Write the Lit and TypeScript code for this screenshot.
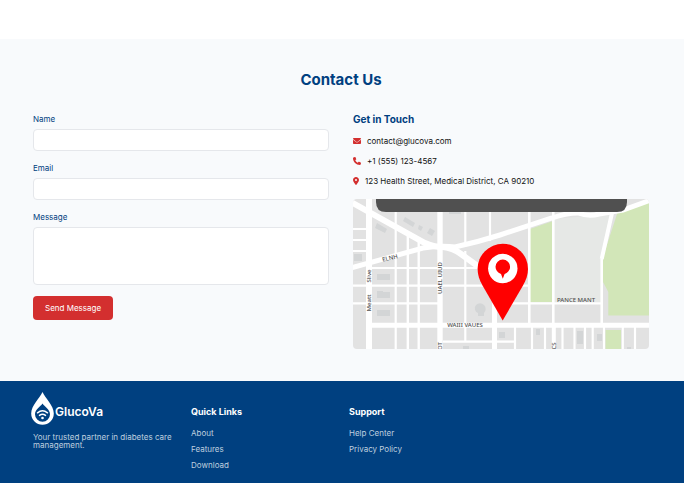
import { LitElement, html, css, svg } from "lit";
import { customElement } from "lit/decorators.js";

const icons = {
  mail: html`<svg class="icon" width="8" height="8" viewBox="0 0 512 512" aria-hidden="true"><path d="M48 64C21.500 64 0 85.500 0 112c0 15.100 7.100 29.300 19.200 38.400L236.800 313.600c11.400 8.500 27 8.500 38.400 0L492.800 150.400c12.100-9.100 19.200-23.300 19.200-38.400c0-26.500-21.500-48-48-48H48zM0 176V384c0 35.300 28.700 64 64 64H448c35.300 0 64-28.700 64-64V176L294.400 339.200c-22.800 17.100-54 17.100-76.800 0L0 176z"/></svg>`,
  phone: html`<svg class="icon" width="8" height="8" viewBox="0 0 512 512" aria-hidden="true"><path d="M164.900 24.600c-7.700-18.600-28-28.500-47.400-23.200l-88 24C12.100 30.200 0 46 0 64C0 311.400 200.600 512 448 512c18 0 33.800-12.100 38.600-29.500l24-88c5.300-19.400-4.600-39.700-23.200-47.400l-96-40c-16.300-6.800-35.200-2.100-46.300 11.600L304.700 368C234.300 334.700 177.300 277.700 144 207.300L193.300 167c13.700-11.200 18.400-30 11.600-46.300l-40-96z"/></svg>`,
  place: html`<svg class="icon" width="6" height="8" viewBox="0 0 384 512" aria-hidden="true"><path d="M215.700 499.200C267 435 384 279.400 384 192C384 86 298 0 192 0S0 86 0 192c0 87.400 117 243 168.300 307.200c12.300 15.300 35.100 15.300 47.400 0zM192 128a64 64 0 1 1 0 128 64 64 0 1 1 0-128z"/></svg>`,
};

const contacts = [
  { icon: icons.mail, text: "contact@glucova.com" },
  { icon: icons.phone, text: "+1 (555) 123-4567" },
  { icon: icons.place, text: "123 Health Street, Medical District, CA 90210" },
];

const linkGroups = [
  { title: "Quick Links", links: ["About", "Features", "Download"] },
  { title: "Support", links: ["Help Center", "Privacy Policy"] },
];

const parks = [
  "M177 30L200 22V103H177Z",
  "M265 12L296 3V116.500H255.300V93L250 83V58Z",
  "M252.500 131H268V150H252.500Z",
];

const buildings = [
  "M24 24L34 30L32 34L22 29Z",
  "M52 18L62 24L60 28L50 22Z",
  "M66 26L70 28L68 32L65 30Z",
  "M77 29L82 32L79 37L74 34Z",
  "M1 55H9V62H1Z",
  "M24 75H37V81H24Z",
  "M24 92H30V93H37V99H24Z",
  "M24 111H37V117H24Z",
  "M96 13H108V15H96Z",
  "M123 106A5 5 0 1 1 131 114V117H125V114A5 5 0 0 1 123 106Z",
  "M146 133H152V139H146Z",
  "M183 130H187V136H183Z",
  "M224 132H230V145H224Z",
  "M244 135H249V142H244Z",
  "M110 147H116V150H110Z",
  "M274 148H278V150H274Z",
];

const roads = [
  { w: 6, d: "M16 0V150" },
  { w: 5.4, d: "M87 0V150" },
  { w: 2.2, d: "M42.700 13V150M112.300 13V47M112.300 52V143M137 13V42M136.800 48V70" },
  { w: 2.4, d: "M54.800 34V150M65.700 40V150" },
  { w: 5, d: "M141.500 68V150" },
  { w: 2.6, d: "M176.300 13V126M200.300 13V126M248.700 60V126" },
  { w: 4, d: "M248.700 60L259 14M200.800 126V150" },
  { w: 5, d: "M18 126.300H296" },
  { w: 2.2, d: "M16 69H125M0 86.700H176M0 104.300H85M153 104.300H249M0 30H14M0 41H14M0 52H14M90 142.700H161" },
  { w: 2.2, d: "M162 128V150M179 128V150M192 128V150M209.500 128V150M221.500 128V150M232 128V150M239.700 128V150M251 128V150M269.800 128V150M282 128V150" },
  { w: 6, d: "M-2 3L72 44Q80 48 90 48Q100 49 108 55L126 68" },
  { w: 5, d: "M-2 69L70 49Q88 46 102 48Q125 43 147 36L199 19Q213 14 225 14Q236 18 246 15L270 11L298 1" },
];

const streets = [
  { x: 37, y: 59, a: -14, t: "ELNH" },
  { x: 16, y: 77, a: -90, t: "Slive" },
  { x: 16, y: 104, a: -90, t: "Meatt" },
  { x: 87, y: 79, a: -90, t: "UAEL UIUD" },
  { x: 112, y: 126, a: 0, t: "WAIII VAUES" },
  { x: 223, y: 101, a: 0, t: "PANCE MANT" },
  { x: 87, y: 147, a: -90, t: "OT" },
  { x: 201, y: 147, a: -90, t: "CS" },
];

@customElement("location-map")
export class LocationMap extends LitElement {
  static styles = css`
    :host { display: block; height: 150px; border-radius: 4px; overflow: hidden; }
    .map { display: block; width: 100%; height: 100%; }
    .land { fill: #e2e2e2; }
    .plain { fill: #e6e8e6; }
    .park { fill: #d2e6b8; }
    .building { fill: #d3d5d6; }
    .road { fill: none; stroke: #fff; }
    .street { font: 500 6px "Noto Sans", "Open Sans", sans-serif; fill: #505050; text-anchor: middle; dominant-baseline: central; }
    .banner { fill: #505050; }
    .pin { fill: #f00; }
    .ring { fill: #fff; }
  `;

  render() {
    return html`
      <svg class="map" viewBox="0 0 296 150" preserveAspectRatio="xMidYMid slice" role="img" aria-label="Map">
        <rect class="land" width="296" height="150" />
        <path class="plain" d="M201 20L258 15L248 60V103H201Z" />
        ${parks.map((d) => svg`<path class="park" d=${d} />`)}
        ${buildings.map((d) => svg`<path class="building" d=${d} />`)}
        ${roads.map((r) => svg`<path class="road" stroke-width=${r.w} d=${r.d} />`)}
        ${streets.map((s) => svg`<text class="street" transform="translate(${s.x} ${s.y}) rotate(${s.a})">${s.t}</text>`)}
        <path class="banner" d="M23 0H274V3Q274 13 264 13H33Q23 13 23 3Z" />
        <path class="pin" d="M149.700 121.500L129.500 86.500C126.500 81 124.600 76 124.600 70A25.200 25.200 0 0 1 175 70C175 76 173 81 170 86.500Z" />
        <circle class="ring" cx="149.800" cy="69.500" r="14.700" />
        <path class="pin" d="M149.800 79.700L148 75C144.500 73.500 142.500 71 142.500 67.800A7.300 7.300 0 0 1 157.100 67.800C157.100 71 155 73.500 151.600 75Z" />
      </svg>
    `;
  }
}

@customElement("app-root")
export class AppRoot extends LitElement {
  static styles = css`
    :host {
      display: flex;
      flex-direction: column;
      min-height: 100vh;
      background: #fff;
      color: #111;
      font: 400 8px/12px Inter, "Liberation Sans", sans-serif;
    }
    *, *::before { box-sizing: border-box; }
    h2, h3, p, ul { margin: 0; padding: 0; }
    ul { list-style: none; }
    .contact { margin-top: 39px; padding: 33px 35px 32px 33px; background: #f8fafc; }
    .title { margin-bottom: 25px; font-size: 15px; line-height: 16px; font-weight: 700; text-align: center; color: #004080; }
    .columns { display: grid; grid-template-columns: 1fr 1fr; gap: 24px; }
    .form { display: flex; flex-direction: column; align-items: flex-start; gap: 11px; }
    .field { display: flex; flex-direction: column; gap: 4px; width: 100%; }
    .label { color: #004080; }
    .input { display: block; width: 100%; height: 22px; margin: 0; padding: 4px 8px; border: 1px solid #e5e7eb; border-radius: 4px; background: #fff; font: inherit; resize: none; }
    .area { height: 58px; }
    .send { height: 24px; padding: 0 12px; border: 0; border-radius: 4px; background: #d32f2f; color: #fff; font: inherit; }
    .subtitle { margin-bottom: 10px; font-size: 10px; line-height: 12px; font-weight: 700; color: #004080; }
    .list { display: flex; flex-direction: column; gap: 8px; margin-bottom: 12px; }
    .item { display: flex; align-items: center; gap: 6px; }
    .icon { flex: none; fill: #d32f2f; }
    .footer { flex: 1; display: grid; grid-template-columns: repeat(4, 1fr); gap: 16px; padding: 11px 35px 12px 33px; background: #004080; color: #fff; }
    .brand { display: flex; align-items: flex-end; gap: 1px; margin: 0 0 8px -2px; font-size: 12px; line-height: 26px; font-weight: 600; }
    .drop { flex: none; fill: #fff; }
    .hole { fill: #004080; }
    .wave { fill: none; stroke: #fff; stroke-width: 1.5; stroke-linecap: round; }
    .motto { line-height: 8px; color: #bfcfdf; }
    .group { padding-top: 14px; }
    .heading { margin-bottom: 9px; font-size: 9px; line-height: 12px; font-weight: 700; }
    .links { display: flex; flex-direction: column; gap: 4px; }
    .link { display: block; color: #bfcfdf; text-decoration: none; }
  `;

  render() {
    return html`
      <section class="contact">
        <h2 class="title">Contact Us</h2>
        <div class="columns">
          <form class="form">
            <div class="field">
              <label class="label" for="name">Name</label>
              <input class="input" id="name" type="text" />
            </div>
            <div class="field">
              <label class="label" for="email">Email</label>
              <input class="input" id="email" type="email" />
            </div>
            <div class="field">
              <label class="label" for="message">Message</label>
              <textarea class="input area" id="message"></textarea>
            </div>
            <button class="send" type="button">Send Message</button>
          </form>
          <div>
            <h3 class="subtitle">Get in Touch</h3>
            <ul class="list">
              ${contacts.map((c) => html`<li class="item">${c.icon}<span>${c.text}</span></li>`)}
            </ul>
            <location-map></location-map>
          </div>
        </div>
      </section>
      <footer class="footer">
        <div>
          <div class="brand">
            <svg class="drop" width="23" height="33" viewBox="0 0 23 33" aria-hidden="true">
              <path d="M11.500 0C14 6 22.800 13.500 22.800 21.500A11.300 11.300 0 0 1 .2 21.500C.2 13.500 9 6 11.500 0Z" />
              <path class="hole" d="M11.500 11.500C13.500 14.500 19 17.500 19 22.200A7.500 7.500 0 0 1 4 22.200C4 17.500 9.500 14.500 11.500 11.500Z" />
              <path class="wave" d="M6.500 20.800Q11.500 16.800 16.500 20.800M8.500 23.400Q11.500 21 14.500 23.400" />
              <circle cx="11.500" cy="26" r="1.300" />
            </svg>
            <span>GlucoVa</span>
          </div>
          <p class="motto">Your trusted partner in diabetes care management.</p>
        </div>
        ${linkGroups.map((g) => html`
          <nav class="group" aria-label=${g.title}>
            <h3 class="heading">${g.title}</h3>
            <ul class="links">
              ${g.links.map((l) => html`<li><a class="link" href="#">${l}</a></li>`)}
            </ul>
          </nav>
        `)}
      </footer>
    `;
  }
}
